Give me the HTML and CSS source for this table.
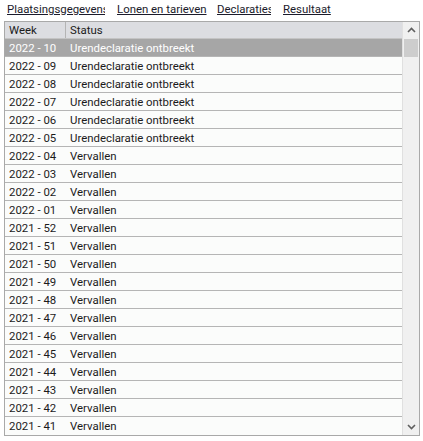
FILE: index.html
```html
<!DOCTYPE html>
<html>
<head>
<meta charset="utf-8">
<link rel="stylesheet" href="styles.css">
</head>
<body>
<nav class="tabs">
  <a class="tab t1">Plaatsingsgegevens</a>
  <a class="tab t2">Lonen en tarieven</a>
  <a class="tab t3">Declaraties</a>
  <a class="tab t4">Resultaat</a>
</nav>
<div class="grid">
  <div class="list">
    <div class="head"><div class="c1">Week</div><div class="c2">Status</div></div>
    <div class="row sel"><div class="c1">2022 - 10</div><div class="c2">Urendeclaratie ontbreekt</div></div>
    <div class="row"><div class="c1">2022 - 09</div><div class="c2">Urendeclaratie ontbreekt</div></div>
    <div class="row"><div class="c1">2022 - 08</div><div class="c2">Urendeclaratie ontbreekt</div></div>
    <div class="row"><div class="c1">2022 - 07</div><div class="c2">Urendeclaratie ontbreekt</div></div>
    <div class="row"><div class="c1">2022 - 06</div><div class="c2">Urendeclaratie ontbreekt</div></div>
    <div class="row"><div class="c1">2022 - 05</div><div class="c2">Urendeclaratie ontbreekt</div></div>
    <div class="row"><div class="c1">2022 - 04</div><div class="c2">Vervallen</div></div>
    <div class="row"><div class="c1">2022 - 03</div><div class="c2">Vervallen</div></div>
    <div class="row"><div class="c1">2022 - 02</div><div class="c2">Vervallen</div></div>
    <div class="row"><div class="c1">2022 - 01</div><div class="c2">Vervallen</div></div>
    <div class="row"><div class="c1">2021 - 52</div><div class="c2">Vervallen</div></div>
    <div class="row"><div class="c1">2021 - 51</div><div class="c2">Vervallen</div></div>
    <div class="row"><div class="c1">2021 - 50</div><div class="c2">Vervallen</div></div>
    <div class="row"><div class="c1">2021 - 49</div><div class="c2">Vervallen</div></div>
    <div class="row"><div class="c1">2021 - 48</div><div class="c2">Vervallen</div></div>
    <div class="row"><div class="c1">2021 - 47</div><div class="c2">Vervallen</div></div>
    <div class="row"><div class="c1">2021 - 46</div><div class="c2">Vervallen</div></div>
    <div class="row"><div class="c1">2021 - 45</div><div class="c2">Vervallen</div></div>
    <div class="row"><div class="c1">2021 - 44</div><div class="c2">Vervallen</div></div>
    <div class="row"><div class="c1">2021 - 43</div><div class="c2">Vervallen</div></div>
    <div class="row"><div class="c1">2021 - 42</div><div class="c2">Vervallen</div></div>
    <div class="row last"><div class="c1">2021 - 41</div><div class="c2">Vervallen</div></div>
  </div>
  <div class="scroll">
    <div class="arrow"><svg width="9" height="6" viewBox="0 0 9 6"><path d="M1 5 L4.5 1.5 L8 5" fill="none" stroke="#5f5f5f" stroke-width="1.6"/></svg></div>
    <div class="thumb"></div>
    <div class="track"></div>
    <div class="arrow"><svg width="9" height="6" viewBox="0 0 9 6"><path d="M1 1 L4.5 4.5 L8 1" fill="none" stroke="#5f5f5f" stroke-width="1.6"/></svg></div>
  </div>
</div>
</body>
</html>
```
FILE: styles.css
```css
html, body {
  margin: 0;
  padding: 0;
  background: #ffffff;
}
body {
  font-family: Roboto, "Noto Sans", sans-serif;
  font-size: 11.4px;
  color: #1b1b1b;
  width: 423px;
  height: 441px;
  overflow: hidden;
}
.tabs {
  display: flex;
  padding: 2px 0 0 7px;
  height: 19px;
  box-sizing: border-box;
}
.tab {
  color: #1b1b2b;
  text-decoration: underline;
  white-space: nowrap;
  overflow: hidden;
  line-height: 14px;
  height: 15px;
  flex: none;
}
.t1 { width: 98px; margin-right: 12px; }
.t2 { width: 91px; margin-right: 9px; }
.t3 { width: 54px; margin-right: 12px; }
.t4 { width: 52px; }
.grid {
  margin: 2px 0 0 4px;
  width: 416px;
  height: 415px;
  box-sizing: border-box;
  border: 1px solid #a9a9a9;
  display: flex;
}
.list {
  flex: 1;
  background: #fbfcfb;
  overflow: hidden;
}
.head, .row {
  display: flex;
  height: 18px;
  box-sizing: border-box;
  align-items: center;
}
.head {
  background: #dcdde1;
  border-bottom: 1px solid #c4c4c4;
  height: 17px;
}
.head .c1 {
  border-right: 1px solid #b4b4b4;
  height: 100%;
  display: flex;
  align-items: center;
}
.row {
  border-bottom: 1px solid #b5b5b5;
}
.row.last {
  border-bottom: none;
}
.row.sel {
  background: #a6a6a6;
  color: #ffffff;
}
.c1 {
  width: 61px;
  padding-left: 4px;
  box-sizing: border-box;
}
.c2 {
  padding-left: 4px;
}
.scroll {
  width: 16px;
  background: #f0f0f0;
  border-left: 1px solid #e0e0e0;
  display: flex;
  flex-direction: column;
}
.arrow {
  height: 16px;
  display: flex;
  align-items: center;
  justify-content: center;
}
.thumb {
  height: 18px;
  margin: 1px 1px 0 1px;
  background: #cdcdcd;
}
.track {
  flex: 1;
}
```
